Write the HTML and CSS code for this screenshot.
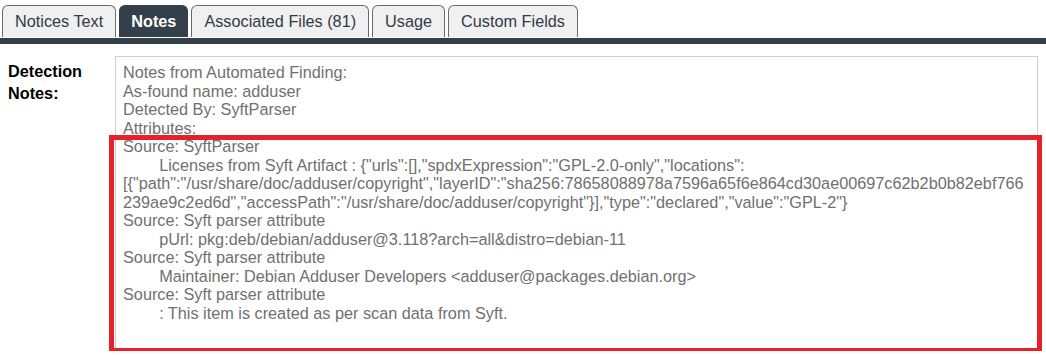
FILE: index.html
```html
<!DOCTYPE html>
<html>
<head>
    <title>Component Notes</title>
    <link rel="stylesheet" href="styles.css">
</head>
<body>
    <div class="tab-row">
        <div class="tab">Notices Text</div>
        <div class="tab active">Notes</div>
        <div class="tab">Associated Files (81)</div>
        <div class="tab">Usage</div>
        <div class="tab">Custom Fields</div>
    </div>
    <div class="tab-bar"></div>

    <div class="detail-row">
        <div class="detail-label">Detection Notes:</div>
        <div class="notes-wrap">
<div class="notes-box">Notes from Automated Finding:
As-found name: adduser
Detected By: SyftParser
Attributes:
Source: SyftParser
&#9;Licenses from Syft Artifact : {"urls":[],"spdxExpression":"GPL-2.0-only","locations":
[{"path":"/usr/share/doc/adduser/copyright","layerID":"sha256:78658088978a7596a65f6e864cd30ae00697c62b2b0b82ebf766
239ae9c2ed6d","accessPath":"/usr/share/doc/adduser/copyright"}],"type":"declared","value":"GPL-2"}
Source: Syft parser attribute
&#9;pUrl: pkg:deb/debian/adduser@3.118?arch=all&amp;distro=debian-11
Source: Syft parser attribute
&#9;Maintainer: Debian Adduser Developers &lt;adduser@packages.debian.org&gt;
Source: Syft parser attribute
&#9;: This item is created as per scan data from Syft.
</div>
            <div class="highlight"></div>
        </div>
    </div>
</body>
</html>
```

FILE: styles.css
```css
body {
    margin: 0;
    font-family: "Liberation Sans", Arial, sans-serif;
    font-size: 16.25px;
    background: #fff;
    overflow: hidden;
}
.tab-row {
    display: flex;
    gap: 3px;
    padding: 5px 2px 0;
}
.tab {
    height: 31px;
    line-height: 31px;
    padding: 0 12px;
    border: 1px solid #6b6b6b;
    border-bottom: none;
    border-radius: 6px 6px 0 0;
    background-color: #f0f0f0;
    color: #2f3b45;
}
.tab.active {
    padding: 0 11px;
    background-color: #333f4a;
    border-color: #333f4a;
    color: #fff;
    font-weight: bold;
}
.tab-bar {
    height: 6px;
    margin-top: 1px;
    background-color: #333f4a;
}
.detail-row {
    display: flex;
    padding: 12px 8px 0 8px;
}
.detail-label {
    width: 107px;
    flex-shrink: 0;
    padding-top: 4px;
    font-weight: bold;
    line-height: 22px;
    color: #000;
}
.notes-wrap {
    position: relative;
    flex: 1;
}
.notes-box {
    height: 282px;
    padding: 6px 8px 5px 7px;
    border: 1px solid #cfcfcf;
    color: #707070;
    line-height: 18.5px;
    white-space: pre;
    tab-size: 8;
    overflow: hidden;
}
.highlight {
    position: absolute;
    left: -6px;
    top: 79px;
    width: 923px;
    height: 208px;
    border: 5px solid #e8202a;
    pointer-events: none;
}
```
